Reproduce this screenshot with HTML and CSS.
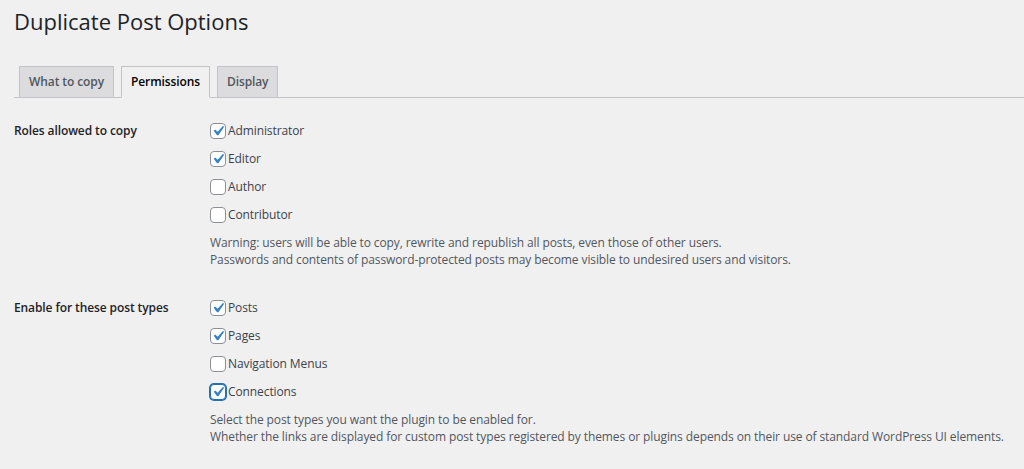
FILE: index.html
```html
<!DOCTYPE html>
<html lang="en">
<head>
    <meta charset="UTF-8">
    <title>Duplicate Post Options</title>
    <link rel="stylesheet" href="styles.css">
</head>
<body>
<div class="wrap">
    <h1>Duplicate Post Options</h1>

    <div class="nav-tabs">
        <a href="#" class="nav-tab">What to copy</a>
        <a href="#" class="nav-tab active">Permissions</a>
        <a href="#" class="nav-tab">Display</a>
    </div>

    <!-- roles -->
    <div class="section">
        <div class="th">Roles allowed to copy</div>
        <div class="td">
            <label class="opt"><span class="box"><svg viewBox="0 0 20 20"><path d="M14.83 4.89l1.34.94-5.81 8.38H9.02L5.78 9.67l1.34-1.25 2.57 2.4z"/></svg></span>Administrator</label>
            <label class="opt"><span class="box"><svg viewBox="0 0 20 20"><path d="M14.83 4.89l1.34.94-5.81 8.38H9.02L5.78 9.67l1.34-1.25 2.57 2.4z"/></svg></span>Editor</label>
            <label class="opt"><span class="box"></span>Author</label>
            <label class="opt"><span class="box"></span>Contributor</label>
            <p class="description">Warning: users will be able to copy, rewrite and republish all posts, even those of other users.<br>
                Passwords and contents of password-protected posts may become visible to undesired users and visitors.</p>
        </div>
    </div>

    <!-- post types -->
    <div class="section">
        <div class="th">Enable for these post types</div>
        <div class="td">
            <label class="opt"><span class="box"><svg viewBox="0 0 20 20"><path d="M14.83 4.89l1.34.94-5.81 8.38H9.02L5.78 9.67l1.34-1.25 2.57 2.4z"/></svg></span>Posts</label>
            <label class="opt"><span class="box"><svg viewBox="0 0 20 20"><path d="M14.83 4.89l1.34.94-5.81 8.38H9.02L5.78 9.67l1.34-1.25 2.57 2.4z"/></svg></span>Pages</label>
            <label class="opt"><span class="box"></span>Navigation Menus</label>
            <label class="opt"><span class="box focus"><svg viewBox="0 0 20 20"><path d="M14.83 4.89l1.34.94-5.81 8.38H9.02L5.78 9.67l1.34-1.25 2.57 2.4z"/></svg></span>Connections</label>
            <p class="description">Select the post types you want the plugin to be enabled for.<br>
                Whether the links are displayed for custom post types registered by themes or plugins depends on their use of standard WordPress UI elements.</p>
        </div>
    </div>
</div>
</body>
</html>
```

FILE: styles.css
```css
body,h1,p{margin:0;padding:0}
body{
    background:#f0f0f1;
    color:#3c434a;
    font:12px/1.4 "Open Sans", "Noto Sans", sans-serif;
    letter-spacing:-0.1px;
}
a{text-decoration:none}
.wrap{
    padding:6px 0 0 14px;
}
h1{
    font-size:22px;
    font-weight:400;
    line-height:30px;
    letter-spacing:0;
    color:#1d2327;
}
.nav-tabs{
    margin-top:30px;
    padding-left:5px;
    display:flex;
    align-items:flex-end;
    gap:7px;
    border-bottom:1px solid #c3c4c7;
}
.nav-tab{
    display:block;
    margin-bottom:-1px;
    padding:0 9px;
    line-height:30px;
    font-size:12px;
    font-weight:600;
    color:#50575e;
    background:#dcdcde;
    border:1px solid #c3c4c7;
}
.nav-tab.active{
    background:#f0f0f1;
    color:#000;
    border-bottom-color:#f0f0f1;
}
.section{
    display:flex;
    padding:19px 0 7px;
}
.th{
    width:196px;
    flex:none;
    line-height:28px;
    font-weight:600;
    color:#1d2327;
}
.opt{
    display:flex;
    align-items:center;
    height:28px;
    gap:2px;
}
.box{
    width:14px;
    height:14px;
    border:1px solid #8c8f94;
    border-radius:4px;
    background:#fff;
    position:relative;
}
.box svg{
    position:absolute;
    left:-3px;
    top:-3px;
    width:20px;
    height:20px;
    fill:#3582c4;
}
.box.focus{
    border-color:#2271b1;
    box-shadow:0 0 0 1px #2271b1;
}
.description{
    margin-top:5px;
    line-height:17px;
    color:#50575e;
}
```
